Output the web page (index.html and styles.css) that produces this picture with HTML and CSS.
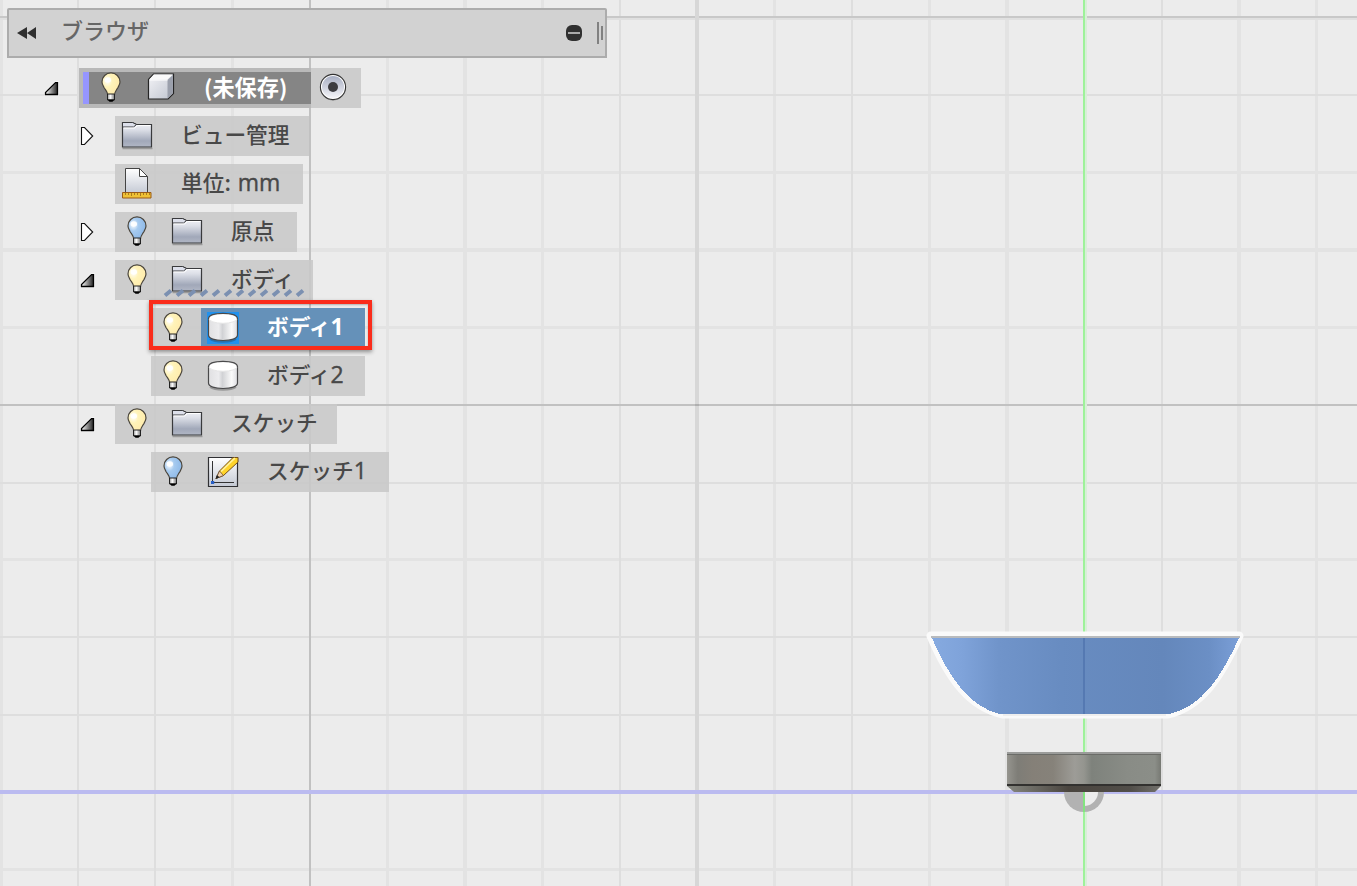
FILE: index.html
```
<!DOCTYPE html>
<html lang="ja">
<head>
<meta charset="utf-8">
<title>ブラウザ</title>
<link rel="stylesheet" href="styles.css">
</head>
<body>
<svg class="viewport" viewBox="0 0 1357 886" aria-hidden="true">
  <defs>
    <linearGradient id="bowl"><stop offset="0" stop-color="#86aae0"/><stop offset=".1" stop-color="#7fa3da"/><stop offset=".22" stop-color="#7094ca"/><stop offset=".42" stop-color="#688cc1"/><stop offset=".75" stop-color="#6487bb"/><stop offset=".9" stop-color="#6b8fc5"/><stop offset="1" stop-color="#7b9fd8"/></linearGradient>
    <linearGradient id="metal"><stop offset="0" stop-color="#96958f"/><stop offset=".07" stop-color="#7e7d77"/><stop offset=".17" stop-color="#858078"/><stop offset=".3" stop-color="#86827a"/><stop offset=".44" stop-color="#9d9c97"/><stop offset=".5" stop-color="#94958f"/><stop offset=".55" stop-color="#7e827c"/><stop offset=".78" stop-color="#898c86"/><stop offset=".96" stop-color="#8b8e88"/><stop offset="1" stop-color="#777973"/></linearGradient>
    <linearGradient id="rim"><stop offset="0" stop-color="#85867f"/><stop offset=".4" stop-color="#4a453f"/><stop offset=".8" stop-color="#514e49"/><stop offset="1" stop-color="#72716c"/></linearGradient>
    <linearGradient id="glass" x1="0" y1="0" x2="0" y2="1"><stop offset="0" stop-color="#f4f5f9"/><stop offset=".3" stop-color="#dcdfe7"/><stop offset=".75" stop-color="#a1a8b9"/><stop offset="1" stop-color="#b1b7c5"/></linearGradient>
    <linearGradient id="page" x1="0" y1="0" x2="0" y2="1"><stop stop-color="#fff"/><stop offset="1" stop-color="#c4c9d4"/></linearGradient>
    <linearGradient id="cyl"><stop offset="0" stop-color="#e0e0e2"/><stop offset=".35" stop-color="#ececee"/><stop offset=".48" stop-color="#d1d2d5"/><stop offset=".8" stop-color="#fafafa"/><stop offset="1" stop-color="#dcdce0"/></linearGradient>
    <linearGradient id="dark"><stop offset=".15" stop-color="#ddd"/><stop offset="1" stop-color="#222"/></linearGradient>
    <linearGradient id="base"><stop stop-color="#999"/><stop offset=".4" stop-color="#fff"/><stop offset="1" stop-color="#777"/></linearGradient>
    <radialGradient id="warm" cx=".3" cy=".35" r=".7"><stop offset="0" stop-color="#fff"/><stop offset=".4" stop-color="#fff3b9"/><stop offset="1" stop-color="#ffebab"/></radialGradient>
    <radialGradient id="cool" cx=".3" cy=".35" r=".7"><stop offset="0" stop-color="#fff"/><stop offset=".4" stop-color="#a6caef"/><stop offset="1" stop-color="#8eb9e8"/></radialGradient>
    <linearGradient id="cube" x1="0" y1="0" x2="1" y2="1"><stop stop-color="#f4f4f7"/><stop offset="1" stop-color="#bfc4cf"/></linearGradient>

    <g id="bulb-shape"><path d="M10.800 23.500c-.1-3.800-2-5-3.800-8C5.900 13.500 5 12 5 9.900a9 9 0 0 1 18 0c0 2.100-.9 3.600-2 5.600-1.800 3-3.500 4.200-3.600 8z" stroke="#4b463d" stroke-width="1.200"/><ellipse cx="10.800" cy="8" rx="3.300" ry="2.800" fill="#fff" opacity=".9"/><path d="M10.500 22h7v6h-7z" fill="url(#base)" stroke="#222"/><path d="M10.500 27.500h7l-2 2.300h-3z" fill="#000"/></g>
    <symbol id="bulb-on" viewBox="0 0 28 32"><g fill="url(#warm)"><use href="#bulb-shape"/></g></symbol>
    <symbol id="bulb-off" viewBox="0 0 28 32"><g fill="url(#cool)"><use href="#bulb-shape"/></g></symbol>
    <symbol id="folder" viewBox="0 1 32 32"><path d="M1.500 29.500h30" stroke="#999" stroke-width="1.500"/><path d="M1.500 3.500h10l4 2h15v22.500h-29z" fill="url(#glass)" stroke="#393a3c" stroke-width="1.200"/><path d="M1.500 8h11l3-2.500-4-2h-10z" fill="#dde0eb" stroke="#393a3c"/><path d="M2.500 9h11l3-2.500h13" fill="none" stroke="#fff"/></symbol>
    <symbol id="unit" viewBox="0 1 32 32"><path d="M4.500 1.500h14l8 8v17h-22z" fill="url(#page)" stroke="#444"/><path d="M18.500 1.500v8h8z" fill="#fff" stroke="#444"/><path d="M1.500 25.500h28.500v5.500H1.500z" fill="#efc135" stroke="#9a5b17"/><path d="M4.500 26v2m3-2v2m3-2v3m3-3v2m3-2v2m3-2v3m3-3v2m3-2v2m3-2v2" stroke="#7b4d10" stroke-width=".6"/></symbol>
    <symbol id="body" viewBox="0 1 32 32"><path d="M3 28c5 3.800 21 3.800 26 0" fill="none" stroke="#333" stroke-opacity=".35" stroke-width="2"/><path d="M1.500 8v16c0 3.500 6.500 5.500 14.500 5.500s14.500-2 14.500-5.500V8z" fill="url(#cyl)" stroke="#49494a" stroke-width="1.200"/><ellipse cx="16" cy="7.500" rx="14.200" ry="4.800" fill="#fff" stroke="#e6e6e6"/><path d="M1.500 8c0-3.800 6-5.700 14.500-5.700S30.500 4.200 30.500 8" fill="none" stroke="#49494a" stroke-width="1.200"/></symbol>
    <symbol id="component" viewBox="0 0 32 32"><path d="M3.500 7.500l5-5.500h20v19.500l-5.500 5.500H3.500z" fill="url(#cube)" stroke="#252525" stroke-width="1.200"/><path d="M4.200 7.500l4.600-4.900h19l-5.300 4.900z" fill="#fafafa"/><path d="M22.500 8l5.400-5v18.200l-5.400 5.200z" fill="#9ba0ac"/><path d="M4.500 8h18" stroke="#fff"/></symbol>
    <symbol id="sketch" viewBox="0 0 32 32"><path d="M1.500 1.500h29v29h-29z" fill="url(#page)" stroke="#303033" stroke-width="1.200"/><path d="M5.500 5v21.500h21.500" fill="none" stroke="#333"/><path d="M4 25h3.200v3H4z" fill="#285fc5"/><path d="M9 22.500l3.500-7.500L26 1.500h5v4.500L16.500 19.500z" fill="#ffd42a" stroke="#765018"/><path d="M14 15.500L28 2" stroke="#fff2a0" stroke-width="1.700"/><path d="M9 22.500l3.500-7.500 4 4.500z" fill="#f2d1ae" stroke="#59412e" stroke-width=".7"/><path d="M8.500 23l1.400-4 2.600 2.200z" fill="#222"/></symbol>
    <symbol id="expanded" viewBox="0 0 16 16"><path d="M.3 15V11L11 .3h4V15z" fill="#fff" opacity=".6"/><path d="M1.500 13.500v-2L11.500 1.600h2v11.900z" fill="url(#dark)" stroke="#000" stroke-width="1.300"/></symbol>
    <symbol id="collapsed" viewBox="0 0 16 20"><path d="M1.500 1.500h3l8.200 8.500-8.200 8.500h-3z" fill="#fff" stroke="#111" stroke-width="1.100"/></symbol>
  </defs>

  <g fill="#dedede">
    <path d="M77 0h2v886h-2zM154 0h2v886h-2zM619 0h2v886h-2zM851 0h2v886h-2zM1161 0h2v886h-2zM0 94h1357v2H0zM0 482h1357v2H0zM0 636h1357v2H0zM0 714h1357v2H0z"/>
    <path d="M0 0h3v886H0zM231 0h3v886h-3zM386 0h3v886h-3zM463 0h4v886h-4zM541 0h3v886h-3zM773 0h3v886h-3zM928 0h3v886h-3zM1005 0h4v886h-4zM1237 0h4v886h-4zM1315 0h3v886h-3zM0 171h1357v3H0zM0 248h1357v4H0zM0 326h1357v3H0zM0 558h1357v3H0zM0 868h1357v3H0z" opacity=".6"/>
  </g>
  <path d="M0 16h1357v2H0z" fill="#c8c8c8"/><path d="M0 18h1357v2H0z" fill="#e0e0e0"/>
  <path d="M309 0h2v886h-2z" fill="#c1c1c1"/>
  <path d="M695 0h4v886h-4z" fill="#d7d7d7"/>
  <path d="M0 404h1357v2H0z" fill="#c1c1c1"/><path d="M695 404h4v2h-4z" fill="#afafaf"/>
  <path d="M0 790h1357v4H0z" fill="#bbbbf0"/>
  <path d="M1083 0h2v886h-2z" fill="#9ef29a"/><path d="M1085 0h2v886h-2z" fill="#d8efd7"/>

  <path d="M931 636H1239C1220 678 1201 706 1168 714H1003C970 707 950 680 931 636z" fill="none" stroke="#fafafa" stroke-width="9" stroke-linejoin="round"/>
  <path class="crisp" d="M931 636H1240C1221 678 1202 706 1170 714H1000C970 707 950 680 931 636z" fill="url(#bowl)"/>
  <path d="M931 636h309v2H931z" fill="#b9bbbd"/>
  <path d="M1083 638h2v76h-2z" fill="#5579b2"/>
  <path d="M1003 714h163v2h-163z" fill="#eee"/>

  <path d="M1064 792a20 20 0 0 0 40 0z" fill="#b2b2b2"/>
  <path d="M1085 792h13a14 14 0 0 1-13 14z" fill="#ededed"/>
  <path d="M1083 792h2v20h-2z" fill="#83e480"/>
  <path d="M1007 784h154v2l-6 6h-141l-7-6z" fill="url(#rim)"/>
  <path d="M1007 753h154v32h-154z" fill="url(#metal)"/>
  <path d="M1007 752h154v2h-154z" fill="#9b9c9a"/>
  <path d="M1007 754h154v1h-154z" fill="#6b6c68"/>
  <path d="M1007 784h154v2h-154z" fill="#32312f"/>
</svg>

<main class="browser">
  <header class="titlebar">
    <svg class="rewind" viewBox="0 0 20 14"><path d="M0 7l10-6v12zM10 7l9-6v12z" fill="#303030"/></svg>
    <span class="title">ブラウザ</span>
    <svg class="minimize" viewBox="0 0 16 16"><rect width="16" height="16" rx="6" fill="#303030"/><path d="M2 7h12v2H2z" fill="#aaa"/></svg>
    <svg class="grip" viewBox="0 0 6 22"><path d="M0 0h2v22H0zM4 4h2v14H4z" fill="#818181"/></svg>
  </header>

  <ul class="tree">
    <li class="row root">
      <svg class="arrow"><use href="#expanded"/></svg>
      <div class="chip root-chip"><svg class="bulb"><use href="#bulb-on"/></svg><svg class="icon"><use href="#component"/></svg><span class="label">(未保存)</span></div>
      <div class="activate"><svg viewBox="0 0 28 28"><circle cx="14" cy="14.700" r="12.700" fill="#999"/><circle cx="14" cy="14" r="12.600" fill="#fff" stroke="#333" stroke-width="1.100"/><circle cx="14" cy="14" r="11" fill="url(#radio)"/><circle cx="14" cy="14" r="5" fill="#3c3c40"/><defs><linearGradient id="radio" x1="0" y1="0" x2="0" y2="1"><stop offset="0" stop-color="#a8afc3"/><stop offset="1" stop-color="#f4f4f8"/></linearGradient></defs></svg></div>
    </li>
    <li class="row level-1">
      <svg class="arrow closed"><use href="#collapsed"/></svg>
      <div class="chip views"><svg class="icon"><use href="#folder"/></svg><span class="label">ビュー管理</span></div>
    </li>
    <li class="row level-1">
      <span class="arrow"></span>
      <div class="chip units"><svg class="icon"><use href="#unit"/></svg><span class="label">単位: <span class="latin">mm</span></span></div>
    </li>
    <li class="row level-1">
      <svg class="arrow closed"><use href="#collapsed"/></svg>
      <div class="chip origin"><svg class="bulb"><use href="#bulb-off"/></svg><svg class="icon"><use href="#folder"/></svg><span class="label">原点</span></div>
    </li>
    <li class="row level-1">
      <svg class="arrow"><use href="#expanded"/></svg>
      <div class="chip bodies"><svg class="bulb"><use href="#bulb-on"/></svg><svg class="icon"><use href="#folder"/></svg><span class="label">ボディ</span>
        <svg class="hatch" viewBox="0 0 140 8"><path d="M1 6.500l6-5m6 5l6-5m6 5l6-5m6 5l6-5m6 5l6-5m6 5l6-5m6 5l6-5m6 5l6-5m6 5l6-5m6 5l6-5m6 5l6-5m6 5l6-5" fill="none" stroke="#7b90b1" stroke-width="4"/></svg>
      </div>
    </li>
    <li class="row level-2">
      <div class="chip selected"><svg class="bulb"><use href="#bulb-on"/></svg><div class="selection"><svg class="icon"><use href="#body"/></svg><span class="label">ボディ<span class="latin">1</span></span></div><div class="callout"></div></div>
    </li>
    <li class="row level-2">
      <div class="chip body-two"><svg class="bulb"><use href="#bulb-on"/></svg><svg class="icon"><use href="#body"/></svg><span class="label">ボディ<span class="latin">2</span></span></div>
    </li>
    <li class="row level-1">
      <svg class="arrow"><use href="#expanded"/></svg>
      <div class="chip sketches"><svg class="bulb"><use href="#bulb-on"/></svg><svg class="icon"><use href="#folder"/></svg><span class="label">スケッチ</span></div>
    </li>
    <li class="row level-2">
      <div class="chip sketch-one"><svg class="bulb"><use href="#bulb-off"/></svg><svg class="icon"><use href="#sketch"/></svg><span class="label">スケッチ<span class="latin">1</span></span></div>
    </li>
  </ul>
</main>
</body>
</html>
```
FILE: styles.css
```
* { box-sizing: border-box; }
body {
  margin: 0;
  height: 886px;
  overflow: hidden;
  background: #ececec;
  color: #484848;
  font: 500 21.700px/40px "Noto Sans CJK JP", sans-serif;
}
svg { display: block; flex: none; }
.viewport { position: absolute; inset: 0; width: 1357px; height: 886px; }
.crisp { shape-rendering: crispEdges; }
.browser { position: relative; padding: 8px 0 0 7px; }

.titlebar {
  display: flex;
  align-items: center;
  width: 600px;
  height: 50px;
  padding-left: 8px;
  background: #d2d2d2;
  border: 2px solid #acacac;
  border-radius: 2px 2px 0 0;
}
.rewind { width: 20px; height: 14px; }
.title { width: 90px; margin: -8px 0 0 24px; color: #666; font-size: 22px; }
.minimize { width: 16px; height: 16px; margin-left: 415px; }
.grip { width: 6px; height: 22px; margin-left: 15px; }

.tree {
  display: flex;
  flex-direction: column;
  gap: 8px;
  margin: 10px 0 0;
  padding: 0;
  list-style: none;
}
.row { display: flex; height: 40px; align-items: center; }
.root { padding-left: 36px; }
.level-1 { padding-left: 72px; }
.level-2 { padding-left: 144px; }
.arrow { width: 16px; height: 16px; margin: 1px 19px 0 1px; }
.arrow.closed { height: 20px; margin-top: 0; }

.chip {
  position: relative;
  display: flex;
  align-items: center;
  height: 40px;
  padding-left: 6px;
  background: rgba(200, 200, 200, .88);
  white-space: nowrap;
}
.bulb { width: 28px; height: 32px; margin: 0 0 0 2px; }
.icon { width: 32px; height: 32px; }
.bulb + .icon { margin-left: 20px; }
.label { margin: -4px 0 0 28px; }
.latin { font-family: "Open Sans", "Noto Sans", sans-serif; font-size: 23px; font-weight: 500; -webkit-text-stroke: .4px currentColor; }
.units .latin { margin-left: 2px; }

.root-chip {
  width: 232px;
  padding-left: 10px;
  background: #858585;
  border: solid #b9b9b9;
  border-width: 4px 0 4px 4px;
  color: #fff;
  font-size: 22.200px;
  font-weight: 700;
}
.root-chip::before {
  content: "";
  width: 6px;
  height: 32px;
  margin-left: -10px;
  background: #9696ff;
}
.root-chip .bulb { margin-left: 8px; }
.root-chip .label { margin-left: 27px; }
.activate {
  display: flex;
  width: 50px;
  height: 40px;
  padding-left: 8px;
  align-items: center;
  background: #cdcdcd;
}
.activate svg { width: 28px; height: 28px; margin-top: -2px; }

.views { width: 194px; }
.units { width: 188px; }
.origin { width: 182px; }
.bodies { width: 198px; }
.selected, .body-two { width: 214px; }
.sketches { width: 222px; }
.sketch-one { width: 238px; }

.hatch { position: absolute; left: 49px; top: 29px; width: 140px; height: 8px; overflow: visible; }
.selection {
  display: flex;
  align-items: center;
  width: 165px;
  height: 40px;
  margin-left: 14px;
  padding-left: 6px;
  background: #6591b9;
  color: #fff;
  font-weight: 700;
}
.selection .latin { font-weight: 700; -webkit-text-stroke: 0; }
.selection .icon { background: #2191ed; }
.callout {
  position: absolute;
  left: -2px;
  top: -8px;
  width: 223px;
  height: 50px;
  border: 4px solid #fa2c1b;
  box-shadow: 0 2px 4px rgba(0, 0, 0, .4), inset 0 1px 2px rgba(0, 0, 0, .25);
}
```
